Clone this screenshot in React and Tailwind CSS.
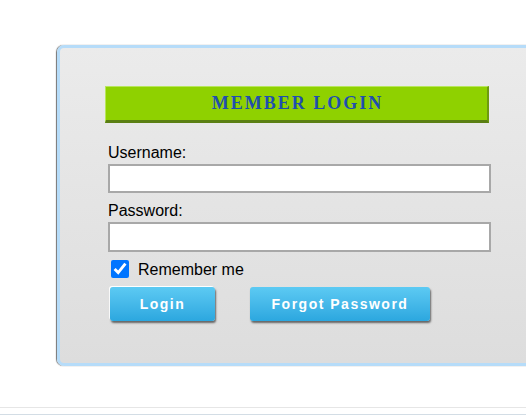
export default function App() {
  return (
    <div className="w-[526px] h-[417px] overflow-hidden bg-white" style={{ fontFamily: '"Liberation Sans", Arial, sans-serif' }}>
      <div className="ml-[57px] mt-[45px] w-[520px] h-[321px] rounded-l-[7px] border-[3px] border-[#b6dcf9] bg-gradient-to-b from-[#ebebeb] to-[#dddddd] shadow-[-1px_0_1px_rgba(0,0,0,0.55)] pt-[38px] pl-[45px]">
        <div className="w-[384px] h-[37px] bg-[#8fd100] border-t border-l border-t-[#b8e65c] border-l-[#b8e65c] border-b-[3px] border-r-2 border-b-[#5a7f12] border-r-[#6e9a10] flex items-center justify-center">
          <span className="text-[18px] font-bold tracking-[2px] text-[#1f4fae] pl-[2px]" style={{ fontFamily: '"Liberation Serif", "Times New Roman", serif' }}>
            MEMBER LOGIN
          </span>
        </div>
        <div className="pl-[3px] pt-[21px] flex flex-col">
          <label className="text-[16px] leading-[18px] text-black">Username:</label>
          <input type="text" className="mt-[2px] w-[383px] h-[29px] border-2 border-[#a8a8a8] bg-white outline-none" />
          <label className="mt-[9px] text-[16px] leading-[18px] text-black">Password:</label>
          <input type="password" className="mt-[2px] w-[383px] h-[30px] border-2 border-[#a8a8a8] bg-white outline-none" />
          <div className="mt-[7px] flex items-center">
            <input type="checkbox" defaultChecked className="ml-[3px] w-[18px] h-[18px] accent-[#0075ff] m-0" />
            <span className="ml-[9px] text-[16px] leading-[18px] text-black pt-[2px]">Remember me</span>
          </div>
          <div className="mt-[8px] flex items-center">
            <button className="ml-[2px] w-[105px] h-[34px] rounded-[3px] bg-gradient-to-b from-[#5ccaf3] to-[#2ba7df] text-white font-bold text-[14px] tracking-[1.5px] shadow-[1px_2px_2px_rgba(0,0,0,0.55),-1px_-1px_0_#ffffff]">
              Login
            </button>
            <button className="ml-[35px] w-[180px] h-[34px] rounded-[3px] bg-gradient-to-b from-[#5ccaf3] to-[#2ba7df] text-white font-bold text-[14px] tracking-[1.5px] shadow-[1px_2px_2px_rgba(0,0,0,0.55)]">
              Forgot Password
            </button>
          </div>
        </div>
      </div>
      <div className="mt-[41px] h-px bg-[#e6e6e6]"></div>
      <div className="mt-[6px] h-px bg-[#d3dde5]"></div>
    </div>
  );
}
